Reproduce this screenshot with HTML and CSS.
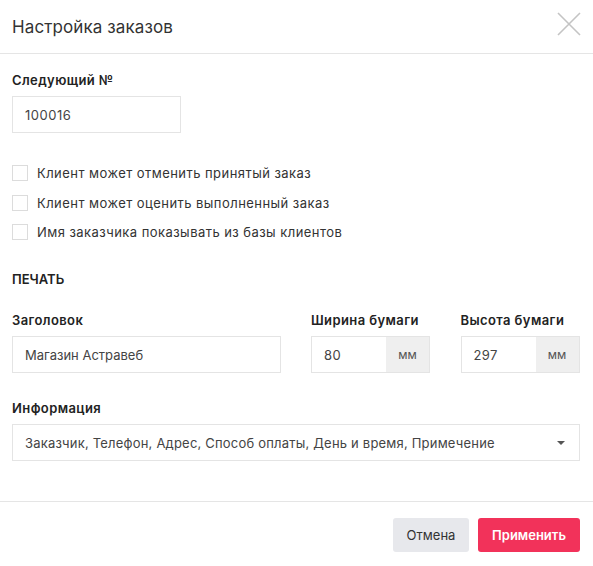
FILE: index.html
```html
<!DOCTYPE html>
<html lang="ru">
<head>
<meta charset="utf-8">
<title>Настройка заказов</title>
<link rel="stylesheet" href="styles.css">
</head>
<body>
<div class="modal">
  <header class="modal-header">
    <h1 class="modal-title">Настройка заказов</h1>
    <button class="close" aria-label="Закрыть">
      <svg width="24" height="24" viewBox="0 0 24 24"><path d="M1 1L23 23M23 1L1 23" stroke="#c4c4c4" stroke-width="1.6" fill="none"/></svg>
    </button>
  </header>
  <div class="modal-body">
    <div class="field">
      <label class="label">Следующий №</label>
      <div class="input input-short">100016</div>
    </div>
    <div class="checks">
      <label class="check"><span class="box"></span>Клиент может отменить принятый заказ</label>
      <label class="check"><span class="box"></span>Клиент может оценить выполненный заказ</label>
      <label class="check"><span class="box"></span>Имя заказчика показывать из базы клиентов</label>
    </div>
    <div class="section-title">ПЕЧАТЬ</div>
    <div class="row">
      <div class="field col-title">
        <label class="label">Заголовок</label>
        <div class="input">Магазин Астравеб</div>
      </div>
      <div class="field col-size">
        <label class="label">Ширина бумаги</label>
        <div class="group"><div class="input gi">80</div><div class="addon">мм</div></div>
      </div>
      <div class="field col-size">
        <label class="label">Высота бумаги</label>
        <div class="group"><div class="input gi">297</div><div class="addon">мм</div></div>
      </div>
    </div>
    <div class="field">
      <label class="label">Информация</label>
      <div class="input select">Заказчик, Телефон, Адрес, Способ оплаты, День и время, Примечение<span class="caret"></span></div>
    </div>
  </div>
  <footer class="modal-footer">
    <button class="btn btn-cancel">Отмена</button>
    <button class="btn btn-primary">Применить</button>
  </footer>
</div>
</body>
</html>
```

FILE: styles.css
```css
* { box-sizing: border-box; }
html, body { margin: 0; padding: 0; background: #fff; }
body {
  font-family: Inter, "Noto Sans", sans-serif;
  color: #333;
  font-size: 13px;
  width: 593px;
  height: 566px;
}
.modal { display: flex; flex-direction: column; }
.modal-header {
  height: 54px;
  border-bottom: 1px solid #e5e5e5;
  display: flex;
  align-items: center;
  justify-content: space-between;
  padding: 0 12px 0 12px;
}
.modal-title {
  margin: 0;
  font-weight: 400;
  font-size: 17px;
  color: #333;
  letter-spacing: 0.1px;
}
.close {
  border: 0; background: none; padding: 0; width: 24px; height: 24px;
  margin-top: -5px;
  display: flex;
}
.modal-body {
  padding: 18px 13px 0 12px;
  height: 448px;
  border-bottom: 1px solid #e5e5e5;
}
.field { display: flex; flex-direction: column; }
.label {
  font-weight: 600;
  font-size: 13px;
  color: #222;
  line-height: 16px;
  margin-bottom: 8px;
  letter-spacing: 0.4px;
}
.input {
  height: 37px;
  border: 1px solid #e4e4e4;
  padding: 0 12px;
  display: flex;
  align-items: center;
  font-size: 13px;
  color: #444;
}
.input-short { width: 169px; letter-spacing: 0.5px; }
.checks {
  margin-top: 32px;
  display: flex;
  flex-direction: column;
  gap: 13.5px;
}
.check {
  display: flex;
  align-items: center;
  gap: 9px;
  font-size: 13px;
  color: #333;
  line-height: 16px;
  letter-spacing: 0.45px;
}
.box {
  width: 16px; height: 16px;
  border: 1px solid #dcdcdc;
  background: #fff;
  flex: none;
}
.section-title {
  margin-top: 31px;
  font-weight: 600;
  font-size: 13px;
  color: #222;
  line-height: 16px;
}
.row {
  margin-top: 25px;
  display: flex;
  gap: 30.5px;
}
.col-title { width: 268.5px; }
.col-size { width: 119px; }
.group { display: flex; height: 37px; }
.gi { flex: 1; border-right: 0; letter-spacing: 0.4px; }
.addon {
  width: 44px;
  background: #efefef;
  border: 1px solid #e4e4e4;
  border-left: 0;
  display: flex;
  align-items: center;
  justify-content: center;
  font-size: 12px;
  color: #555;
}
.row + .field { margin-top: 27px; }
.select { position: relative; justify-content: space-between; width: 568px; letter-spacing: 0.2px; }
.caret {
  width: 0; height: 0;
  border-left: 4px solid transparent;
  border-right: 4px solid transparent;
  border-top: 4px solid #555;
  margin-right: 2px;
}
.modal-footer {
  display: flex;
  justify-content: flex-end;
  gap: 9px;
  padding: 16px 13px 0 0;
}
.btn {
  height: 34px;
  border: 0;
  border-radius: 3px;
  font-family: inherit;
  font-size: 13px;
  padding: 0 13px;
}
.btn-cancel { background: #e7e8ec; color: #333; width: 76px; }
.btn-primary { background: #f2325a; color: #fff; font-weight: 600; width: 102px; }
```
